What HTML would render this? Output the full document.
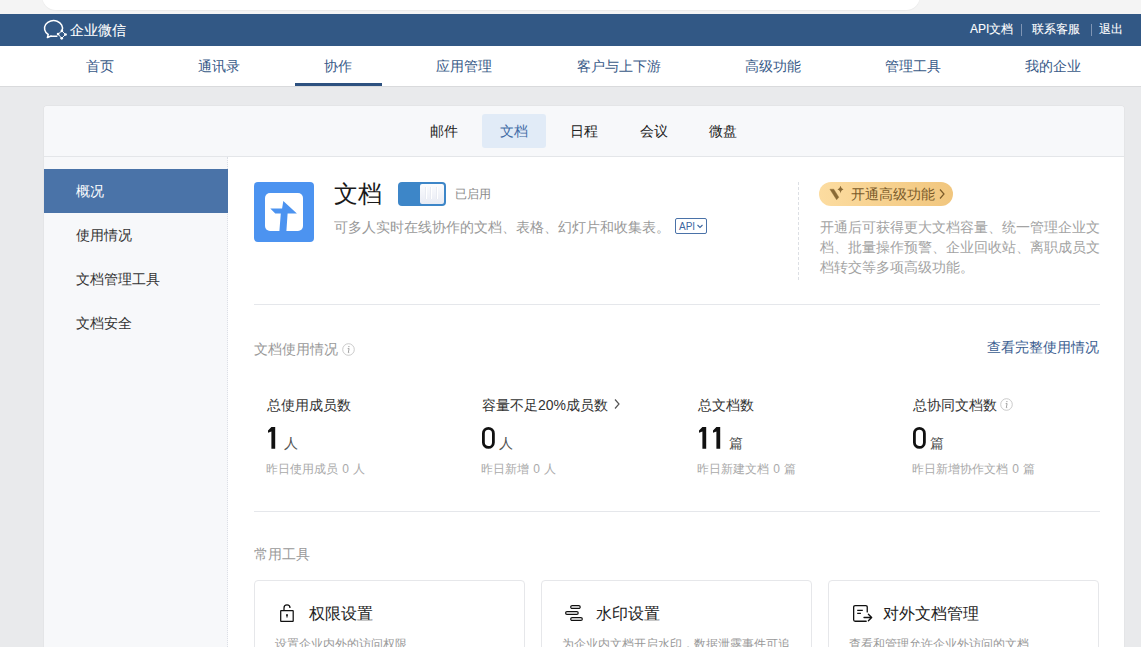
<!DOCTYPE html>
<html><head><meta charset="utf-8">
<style>
*{margin:0;padding:0;box-sizing:border-box}
html,body{width:1141px;height:647px;overflow:hidden;background:#e9eaec;font-family:"Liberation Sans",sans-serif;color:#000}
.abs{position:absolute;white-space:nowrap}
#topstrip{position:absolute;left:0;top:0;width:1141px;height:14px;background:#f4f4f4}
#topbox{position:absolute;left:42px;top:-30px;width:878px;height:40px;background:#fff;border-radius:0 0 14px 14px;box-shadow:0 1px 1px rgba(0,0,0,0.04)}
#hdr{position:absolute;left:0;top:14px;width:1141px;height:32px;background:#325885}
#nav{position:absolute;left:0;top:46px;width:1141px;height:41px;background:#fff;border-bottom:1px solid #d9dadc}
.nv{position:absolute;top:11px;font-size:14px;color:#385a88;line-height:18px;transform:translateX(-50%)}
#card{position:absolute;left:44px;top:106px;width:1080px;height:600px;background:#fff;border-radius:3px 3px 0 0;box-shadow:0 0 1px rgba(0,0,0,0.22)}
#sub{position:absolute;left:0;top:0;width:1080px;height:51px;background:#f7f8fa;border-radius:3px 3px 0 0;border-bottom:1px solid #e4e6e9}
.st{position:absolute;top:8px;height:34px;line-height:34px;font-size:14px;color:#222;transform:translateX(-50%);padding:0 17px;border-radius:3px}
#side{position:absolute;left:0;top:51px;width:184px;height:600px;background:#f7f8fa;border-right:1px dotted #dcdfe6}
.si{position:absolute;left:0;width:184px;height:44px;line-height:44px;padding-left:32px;font-size:14px;color:#333}
.si.on{background:#4a73a8;color:#fff}

.t{position:absolute;white-space:nowrap;line-height:1}
#vline{position:absolute;left:798px;top:182px;width:0;height:98px;border-left:1px dashed #dcdfe4}
.hr{position:absolute;left:254px;width:846px;height:1px;background:#e5e7eb}
.lab{font-size:14px;color:#333}
.num{font-family:"Liberation Sans",sans-serif;font-weight:bold;font-size:29px;color:#111;display:inline-block;transform:scaleX(0.78);transform-origin:0 0}
.unit{font-size:14px;color:#555}
.subt{font-size:12px;color:#aaa;word-spacing:1px}
.tc{position:absolute;top:580px;width:271px;height:100px;border:1px solid #e6e7ea;border-radius:4px;background:#fff}
.tt{font-size:16px;color:#222;margin-top:1px}
.td{font-size:12px;color:#999;margin-top:1px}
</style></head>
<body>
<div id="topstrip"></div>
<div id="topbox"></div>
<div id="hdr">
  <svg class="abs" style="left:40px;top:2px" width="30" height="26" viewBox="0 0 30 26">
    <path d="M22.1 14.6A9 7.7 0 1 0 8.2 18.5L7.4 21.6L10.9 20Q13 20.5 16.8 20.2" fill="none" stroke="#fff" stroke-width="1.5" stroke-linejoin="round" stroke-linecap="round"/>
    <path d="M21.9 14.9L18.1 18.1L21.7 22.3L25.5 18.5Z" fill="none" stroke="#fff" stroke-width="0.9"/>
    <circle cx="21.9" cy="14.9" r="1.35" fill="#fff"/><circle cx="18.1" cy="18.1" r="1.35" fill="#fff"/>
    <circle cx="21.7" cy="22.3" r="1.35" fill="#fff"/><circle cx="25.5" cy="18.5" r="1.35" fill="#fff"/>
  </svg>
  <div class="abs" style="left:70px;top:7px;font-size:14px;color:#fff;line-height:18px;-webkit-text-stroke:0.1px #fff">企业微信</div>
  <div class="t" style="left:970px;top:9px;font-size:12px;color:#fff;-webkit-text-stroke:0.1px #fff">API文档</div>
  <div class="abs" style="left:1021px;top:10px;width:1px;height:12px;background:#7f95b4"></div>
  <div class="t" style="left:1032px;top:9px;font-size:12px;color:#fff;-webkit-text-stroke:0.1px #fff">联系客服</div>
  <div class="abs" style="left:1091px;top:10px;width:1px;height:12px;background:#7f95b4"></div>
  <div class="t" style="left:1099px;top:9px;font-size:12px;color:#fff;-webkit-text-stroke:0.1px #fff">退出</div>
</div>
<div id="nav">
  <div class="nv" style="left:100px">首页</div>
  <div class="nv" style="left:219px">通讯录</div>
  <div class="nv" style="left:338px">协作</div>
  <div class="nv" style="left:464px">应用管理</div>
  <div class="nv" style="left:619px">客户与上下游</div>
  <div class="nv" style="left:773px">高级功能</div>
  <div class="nv" style="left:913px">管理工具</div>
  <div class="nv" style="left:1053px">我的企业</div>
  <div class="abs" style="left:295px;top:37px;width:87px;height:3px;background:#2d5180"></div>
</div>
<div id="card">
  <div id="sub">
    <div class="st" style="left:400px">邮件</div>
    <div class="st" style="left:514px;transform:none;left:438px;padding:0 18px;background:#e1ebf7;color:#3e6aa5">文档</div>
    <div class="st" style="left:540px">日程</div>
    <div class="st" style="left:610px">会议</div>
    <div class="st" style="left:679px">微盘</div>
  </div>
  <div id="side">
    <div class="si on" style="top:12px">概况</div>
    <div class="si" style="top:56px">使用情况</div>
    <div class="si" style="top:100px">文档管理工具</div>
    <div class="si" style="top:144px">文档安全</div>
  </div>
</div>

<!-- main -->
<svg class="abs" style="left:254px;top:182px" width="60" height="60" viewBox="0 0 60 60">
  <rect x="0" y="0" width="60" height="60" rx="4" fill="#4c93f0"/>
  <rect x="11" y="11" width="38" height="38" rx="5" fill="#fff"/>
  <path d="M16.3 26.6L28.1 26.6L29.3 18.9L42.9 31.5L33.6 31.5L32.4 49L25.4 49L26.8 31.5L21.3 31.5Z" fill="#4c93f0"/>
</svg>
<div class="t" style="left:334px;top:182px;font-size:24px;color:#1a1a1a">文档</div>
<div class="abs" style="left:398px;top:182px;width:48px;height:24px;background:#3d86c8;border-radius:4px"></div>
<div class="abs" style="left:420px;top:184px;width:24px;height:20px;background:linear-gradient(#fbfcfe,#e8ebf4);border-radius:2px"></div>
<div class="abs" style="left:425px;top:187px;width:1px;height:12px;background:#e8ebf2"></div><div class="abs" style="left:426px;top:187px;width:1px;height:12px;background:#fff"></div>
<div class="abs" style="left:430px;top:187px;width:1px;height:12px;background:#e8ebf2"></div><div class="abs" style="left:431px;top:187px;width:1px;height:12px;background:#fff"></div>
<div class="abs" style="left:436px;top:187px;width:1px;height:12px;background:#e8ebf2"></div><div class="abs" style="left:437px;top:187px;width:1px;height:12px;background:#fff"></div>
<div class="t" style="left:455px;top:188px;font-size:12px;color:#888">已启用</div>
<div class="t" style="left:334px;top:220px;font-size:14px;color:#999">可多人实时在线协作的文档、表格、幻灯片和收集表。</div>
<div class="abs" style="left:675px;top:218px;width:32px;height:16px;border:1px solid #4a72a8;border-radius:2px"></div>
<div class="t" style="left:679px;top:222px;font-size:10px;color:#3c66a0">API</div>
<svg class="abs" style="left:697px;top:223.5px" width="6" height="5" viewBox="0 0 6 5"><path d="M0.5 1L3 3.5L5.5 1" fill="none" stroke="#3c66a0" stroke-width="1.1"/></svg>
<div id="vline"></div>
<div class="abs" style="left:819px;top:182px;width:134px;height:24px;border-radius:12px;background:linear-gradient(90deg,#fcdca0,#f1c67e)"></div>
<svg class="abs" style="left:829px;top:186px" width="17" height="15" viewBox="0 0 17 15">
  <path d="M0.9 3.2L4.8 3.2L9.8 11.2L7.6 13.8Z" fill="#8a6a35" stroke="#8a6a35" stroke-width="0.4" stroke-linejoin="round"/>
  <path d="M11.5 -0.8Q11.9 2.9 14.5 3.4Q11.9 3.9 11.5 7.6Q11.1 3.9 8.5 3.4Q11.1 2.9 11.5 -0.8Z" fill="#8a6a35"/>
</svg>
<div class="t" style="left:851px;top:187px;font-size:14px;color:#7b5b2a">开通高级功能</div>
<svg class="abs" style="left:938px;top:188px" width="8" height="12" viewBox="0 0 8 12"><path d="M2 1.5L6 6L2 10.5" fill="none" stroke="#7b5b2a" stroke-width="1.2"/></svg>
<div class="abs" style="left:820px;top:217px;width:282px;font-size:14px;line-height:20px;color:#a3a3a3;white-space:normal">开通后可获得更大文档容量、统一管理企业文档、批量操作预警、企业回收站、离职成员文档转交等多项高级功能。</div>
<div class="hr" style="top:304px"></div>
<div class="t" style="left:254px;top:342px;font-size:14px;color:#999">文档使用情况</div>
<svg class="abs" style="left:342px;top:343px" width="13" height="13" viewBox="0 0 13 13"><circle cx="6.5" cy="6.5" r="5.8" fill="none" stroke="#c4c4c4" stroke-width="0.9"/><path d="M6.9 3.6h.01" stroke="#999" stroke-width="1.3" stroke-linecap="round"/><path d="M5.7 5.6H7.1L6.3 9.6H7.2" fill="none" stroke="#999" stroke-width="0.9"/></svg>
<div class="t" style="left:987px;top:340px;font-size:14px;color:#3a5d90">查看完整使用情况</div>

<div class="t lab" style="left:267px;top:398px">总使用成员数</div>
<svg class="abs" style="left:268px;top:427px" width="8" height="22" viewBox="0 0 8 22"><path d="M0 3.5L3.4 0H7.2V21.8H3.4V4.4L0 5.7Z" fill="#111"/></svg>
<div class="t unit" style="left:284px;top:436px">人</div>
<div class="t subt" style="left:266px;top:463px">昨日使用成员 0 人</div>

<div class="t lab" style="left:482px;top:398px">容量不足20%成员数</div>
<svg class="abs" style="left:613px;top:398px" width="8" height="12" viewBox="0 0 8 12"><path d="M2 1.5L6 6L2 10.5" fill="none" stroke="#555" stroke-width="1.2"/></svg>
<svg class="abs" style="left:482px;top:427px" width="13" height="22" viewBox="0 0 13 22"><rect x="1.4" y="1.4" width="10" height="19" rx="5" fill="none" stroke="#111" stroke-width="2.8"/></svg>
<div class="t unit" style="left:499px;top:436px">人</div>
<div class="t subt" style="left:481px;top:463px">昨日新增 0 人</div>

<div class="t lab" style="left:698px;top:398px">总文档数</div>
<svg class="abs" style="left:699px;top:427px" width="8" height="22" viewBox="0 0 8 22"><path d="M0 3.5L3.4 0H7.2V21.8H3.4V4.4L0 5.7Z" fill="#111"/></svg><svg class="abs" style="left:713px;top:427px" width="8" height="22" viewBox="0 0 8 22"><path d="M0 3.5L3.4 0H7.2V21.8H3.4V4.4L0 5.7Z" fill="#111"/></svg>
<div class="t unit" style="left:729px;top:436px">篇</div>
<div class="t subt" style="left:697px;top:463px">昨日新建文档 0 篇</div>

<div class="t lab" style="left:913px;top:398px">总协同文档数</div>
<svg class="abs" style="left:1000px;top:398px" width="13" height="13" viewBox="0 0 13 13"><circle cx="6.5" cy="6.5" r="5.8" fill="none" stroke="#c4c4c4" stroke-width="0.9"/><path d="M6.9 3.6h.01" stroke="#999" stroke-width="1.3" stroke-linecap="round"/><path d="M5.7 5.6H7.1L6.3 9.6H7.2" fill="none" stroke="#999" stroke-width="0.9"/></svg>
<svg class="abs" style="left:913px;top:427px" width="13" height="22" viewBox="0 0 13 22"><rect x="1.4" y="1.4" width="10" height="19" rx="5" fill="none" stroke="#111" stroke-width="2.8"/></svg>
<div class="t unit" style="left:930px;top:436px">篇</div>
<div class="t subt" style="left:912px;top:463px">昨日新增协作文档 0 篇</div>

<div class="hr" style="top:511px"></div>
<div class="t" style="left:254px;top:547px;font-size:14px;color:#999">常用工具</div>

<div class="tc" style="left:254px"></div>
<div class="tc" style="left:541px"></div>
<div class="tc" style="left:828px"></div>

<svg class="abs" style="left:279px;top:604px" width="16" height="19" viewBox="0 0 16 19">
  <path d="M5 6.7V3.9A3 3 0 0 1 11 3.9V4.1" fill="none" stroke="#111" stroke-width="1.25"/>
  <rect x="1.7" y="6.7" width="12.5" height="10.6" rx="0.4" fill="none" stroke="#111" stroke-width="1.25"/>
  <circle cx="8" cy="11" r="0.95" fill="#111"/><path d="M8 11V13.4" stroke="#111" stroke-width="1.1"/>
</svg>
<div class="t tt" style="left:309px;top:605px">权限设置</div>
<div class="t td" style="left:275px;top:637px">设置企业内外的访问权限</div>

<svg class="abs" style="left:564px;top:604px" width="20" height="18" viewBox="0 0 20 18">
  <rect x="6.7" y="1.55" width="9.5" height="2.9" rx="1.45" fill="none" stroke="#111" stroke-width="1.2"/>
  <rect x="1.6" y="7.6" width="12.6" height="2.8" rx="1.4" fill="none" stroke="#111" stroke-width="1.2"/>
  <rect x="6.7" y="13.55" width="11.6" height="2.9" rx="1.45" fill="none" stroke="#111" stroke-width="1.2"/>
</svg>
<div class="t tt" style="left:596px;top:605px">水印设置</div>
<div class="t td" style="left:562px;top:637px">为企业内文档开启水印，数据泄露事件可追</div>

<svg class="abs" style="left:851px;top:604px" width="22" height="19" viewBox="0 0 22 19">
  <path d="M16.25 7.9V3.15Q16.25 1.65 14.75 1.65H4.15Q2.65 1.65 2.65 3.15V15.75Q2.65 17.25 4.15 17.25H15.2" fill="none" stroke="#111" stroke-width="1.3" stroke-linecap="round"/>
  <path d="M6.2 6.4H11.8M6.2 9.3H9.9" fill="none" stroke="#111" stroke-width="1.3"/>
  <path d="M13 13.5H20.3M17.4 10.2L20.7 13.5L17.4 16.8" fill="none" stroke="#111" stroke-width="1.3" stroke-linecap="round" stroke-linejoin="round"/>
</svg>
<div class="t tt" style="left:883px;top:605px">对外文档管理</div>
<div class="t td" style="left:849px;top:637px">查看和管理允许企业外访问的文档</div>
</body></html>
